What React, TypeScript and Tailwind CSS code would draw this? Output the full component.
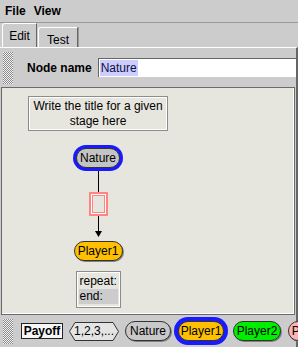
import React from 'react';

const Grip: React.FC<{ className: string }> = ({ className }) => (
  <div
    className={`w-[10px] shrink-0 bg-[repeating-conic-gradient(#8a8a8a_0_25%,#f2f2f2_0_50%)] bg-[length:2px_2px] ${className}`}
  />
);

const Pill: React.FC<{ label: string; fill: string; className?: string }> = ({ label, fill, className = '' }) => (
  <div
    className={`h-[20px] shrink-0 flex items-center justify-center rounded-full border border-[#333] shadow-[1px_1px_0_#808080] ${fill} ${className}`}
  >
    {label}
  </div>
);

export default function App() {
  return (
    <div className="w-[298px] h-[347px] overflow-hidden bg-[#cccccc] text-[12px] text-black font-['Liberation_Sans',Arial,sans-serif] flex flex-col">
      {/* menu */}
      <div className="h-[23px] shrink-0 flex items-center gap-[8px] pl-[5px] border-b border-[#9a9a9a] font-bold">
        <span>File</span>
        <span>View</span>
      </div>

      {/* tabs */}
      <div className="h-[24px] shrink-0 flex items-end pl-[2px]">
        <div className="w-[35px] h-[24px] flex justify-center pt-[3px] border-t border-l border-white border-r border-r-[#666] rounded-tl-[3px]">
          Edit
        </div>
        <div className="ml-[1px] w-[40px] h-[20px] flex justify-center pt-[3px] border-t border-l border-white border-r border-r-[#666] rounded-tl-[3px] shadow-[1px_0_0_#999]">
          Test
        </div>
      </div>

      {/* panel */}
      <div className="flex-1 flex flex-col border-t border-white border-r-2 border-r-[#666] min-h-0">
        {/* toolbar */}
        <div className="h-[39px] shrink-0 flex items-center">
          <Grip className="h-[32px] ml-[3px]" />
          <span className="ml-[14px] font-bold">Node name</span>
          <div className="ml-[6px] flex-1 h-[19px] bg-white border-t border-l border-[#666] flex items-center pl-[1px]">
            <span className="bg-[#ccccff] h-[16px] leading-[16px] px-[1px] text-[#101040]">Nature</span>
          </div>
        </div>

        {/* canvas */}
        <div className="ml-[1px] w-[294px] h-[228px] shrink-0 bg-[#e6e6de] border border-[#6a6a6a] shadow-[inset_-1px_-1px_0_#fff]">
          <div className="w-[192px] flex flex-col items-center pt-[8px]">
            <div className="w-[140px] h-[35px] border border-[#8c8c8c] shadow-[inset_1px_1px_0_#fff,inset_-1px_-1px_0_#fff] flex flex-col items-center justify-center leading-[15px] text-center">
              <span>Write the title for a given</span>
              <span>stage here</span>
            </div>

            <div className="mt-[14px] w-[50px] h-[26px] rounded-[13px] bg-[#1a1aff] p-[3px]">
              <div className="w-full h-full rounded-[10px] bg-[#c4c4c4] border border-[#333] flex items-center justify-center">
                Nature
              </div>
            </div>

            <div className="w-px h-[21px] bg-black" />

            <div className="w-[19px] h-[24px] border-2 border-[#ff8585] p-px bg-white">
              <div className="w-full h-full border border-[#ff8585] bg-[#e6e6de]" />
            </div>

            <div className="w-px h-[15px] bg-black" />
            <svg width="7" height="6" viewBox="0 0 7 6" className="block">
              <polygon points="0,0 7,0 3.5,6" fill="#000" />
            </svg>

            <Pill label="Player1" fill="bg-[#ffc000]" className="mt-[4px] w-[49px]" />

            <div className="mt-[10px] w-[45px] h-[37px] border border-[#8c8c8c] shadow-[inset_1px_1px_0_#fff,inset_-1px_-1px_0_#fff] p-[2px] flex flex-col leading-[15px]">
              <span className="pl-px">repeat:</span>
              <span className="pl-px bg-[#cccccc]">end:</span>
            </div>
          </div>
        </div>

        {/* bottom bar */}
        <div className="flex-1 flex items-center whitespace-nowrap">
          <Grip className="h-[25px] ml-[3px]" />
          <div className="ml-[8px] w-[42px] h-[16px] shrink-0 border border-[#222] bg-[#f6f6f6] flex items-center justify-center font-bold">
            Payoff
          </div>
          <div className="ml-[6px] relative w-[50px] h-[19px] shrink-0 flex items-center justify-center">
            <svg width="50" height="19" viewBox="0 0 50 19" className="absolute inset-0">
              <polygon points="6,0.5 44,0.5 49.5,9.5 44,18.5 6,18.5 0.5,9.5" fill="#e4e4e4" stroke="#333" />
            </svg>
            <span className="relative">1,2,3,...</span>
          </div>
          <Pill label="Nature" fill="bg-[#c8c8c8]" className="ml-[6px] w-[46px]" />
          <div className="ml-[3px] w-[54px] h-[28px] shrink-0 rounded-full bg-[#1a1aff] p-[4px]">
            <div className="w-full h-full rounded-full bg-[#ffc000] border border-[#333] flex items-center justify-center">
              Player1
            </div>
          </div>
          <Pill label="Player2" fill="bg-[#00ee00]" className="ml-[5px] w-[48px]" />
          <Pill label="Player3" fill="bg-[#ffb4b4]" className="ml-[7px] w-[48px]" />
        </div>
      </div>
    </div>
  );
}
